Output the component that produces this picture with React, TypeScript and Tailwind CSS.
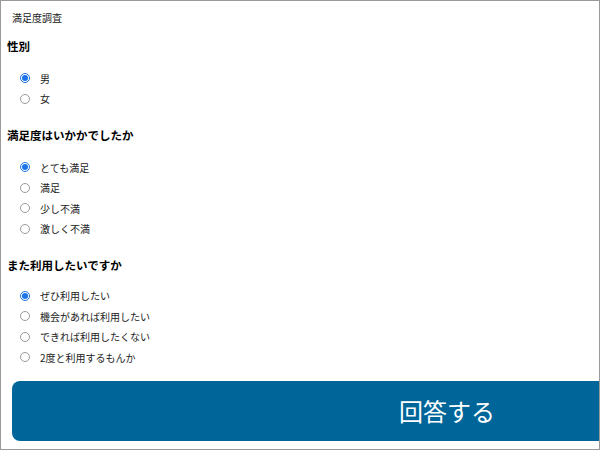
import React from "react";

const font = { fontFamily: '"Noto Sans CJK JP", "Noto Sans", sans-serif' };

type Q = { title: string; name: string; options: string[] };

const questions: Q[] = [
  { title: "性別", name: "sex", options: ["男", "女"] },
  {
    title: "満足度はいかかでしたか",
    name: "satisfaction",
    options: ["とても満足", "満足", "少し不満", "激しく不満"],
  },
  {
    title: "また利用したいですか",
    name: "again",
    options: ["ぜひ利用したい", "機会があれば利用したい", "できれば利用したくない", "2度と利用するもんか"],
  },
];

function Radio({ checked }: { checked: boolean }) {
  return checked ? (
    <span className="flex h-[10px] w-[10px] items-center justify-center rounded-full border border-[#1a73e8] bg-white">
      <span className="h-[6px] w-[6px] rounded-full bg-[#1a73e8]" />
    </span>
  ) : (
    <span className="h-[10px] w-[10px] rounded-full border border-[#9a9a9a] bg-white" />
  );
}

export default function App() {
  return (
    <div
      className="flex h-[450px] w-[600px] flex-col overflow-hidden border border-[#9a9a9a] bg-white"
      style={font}
    >
      <div className="flex h-[33px] shrink-0 items-center pl-[11px] text-[10px] text-[#222]">満足度調査</div>
      {questions.map((q, qi) => (
        <div key={q.name} className={qi === 0 ? "" : "mt-[14px]"}>
          <div className="flex h-[26px] items-center pl-[6px] text-[11.5px] font-bold text-black">{q.title}</div>
          <div className={qi === 2 ? "flex flex-col pl-[19px] pt-[6.5px]" : "flex flex-col pl-[19px] pt-[8px]"}>
            {q.options.map((o, i) => (
              <div key={o} className="flex h-[20.5px] items-center gap-[10px] text-[10px] text-[#222]">
                <Radio checked={i === 0} />
                <span>{o}</span>
              </div>
            ))}
          </div>
        </div>
      ))}
      <div className="mt-[13.5px] flex shrink-0 pl-[11px]">
        <button className="flex h-[60px] w-[870px] shrink-0 items-center justify-center rounded-[8px] bg-[#006699] text-[24px] text-white">
          回答する
        </button>
      </div>
    </div>
  );
}
